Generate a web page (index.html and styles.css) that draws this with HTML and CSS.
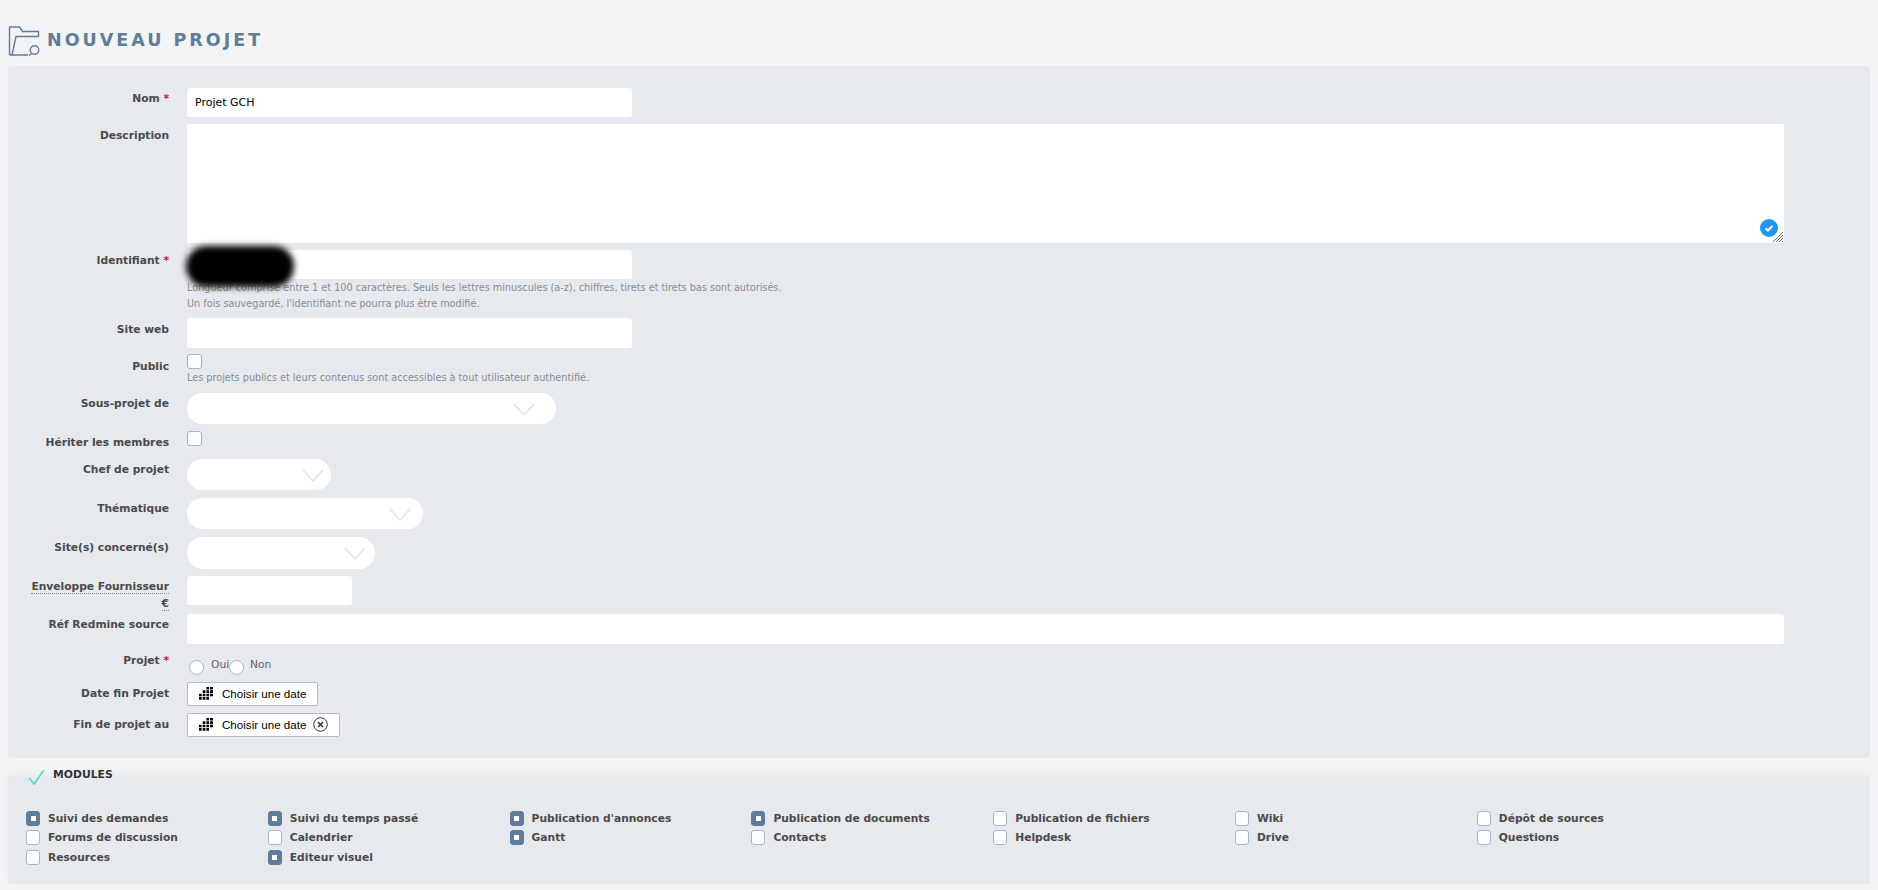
FILE: index.html
```html
<!DOCTYPE html>
<html lang="fr">
<head>
<meta charset="utf-8">
<title>Nouveau projet</title>
<link rel="stylesheet" href="styles.css">
</head>
<body>
<header class="page-title">
  <svg class="title-icon" width="32" height="30" viewBox="0 0 32 30" fill="none" stroke="#5f7c98" stroke-width="1.4">
    <path d="M1.5 29V1h10l3 4.500h16v5"/>
    <path d="M1.500 29H20M31 10.500H8L4 29"/>
    <circle cx="26.500" cy="24" r="4.300"/>
    <path d="M23.500 27.500L21 29.500"/>
  </svg>
  <h1>NOUVEAU PROJET</h1>
</header>
<form class="panel">
  <div class="row row-nom">
    <label class="lbl">Nom <b class="req">*</b></label>
    <input class="text wide" type="text" value="Projet GCH">
  </div>
  <div class="row">
    <label class="lbl lbl-low">Description</label>
    <div class="area-wrap">
      <div class="area"></div>
      <svg class="grammar" width="18" height="18" viewBox="0 0 18 18"><circle cx="9" cy="9" r="9" fill="#2196f3"/><path d="M5.500 9.300l2.400 2.300 4.400-4.600" fill="none" stroke="#fff" stroke-width="2"/></svg>
      <svg class="grip" width="10" height="10" viewBox="0 0 10 10" stroke="#777" stroke-width="1"><path d="M0 10L10 0M3 10l7-7M6 10l4-4M9 10l1-1"/></svg>
    </div>
  </div>
  <div class="row row-id">
    <label class="lbl">Identifiant <b class="req">*</b></label>
    <div class="field">
      <div class="id-wrap">
        <input class="text wide" type="text">
        <span class="blot"></span>
      </div>
      <p class="hint hint-first">Longueur comprise entre 1 et 100 caractères. Seuls les lettres minuscules (a-z), chiffres, tirets et tirets bas sont autorisés.</p>
      <p class="hint">Un fois sauvegardé, l'identifiant ne pourra plus être modifié.</p>
    </div>
  </div>
  <div class="row row-site">
    <label class="lbl lbl-low">Site web</label>
    <input class="text wide tall" type="text">
  </div>
  <div class="row row-public">
    <label class="lbl lbl-lower">Public</label>
    <div class="field">
      <span class="box"></span>
      <p class="hint hint-pub">Les projets publics et leurs contenus sont accessibles à tout utilisateur authentifié.</p>
    </div>
  </div>
  <div class="row row-sous">
    <label class="lbl">Sous-projet de</label>
    <div class="select w369"><svg class="chev chev-sous" width="22" height="13" viewBox="0 0 22 13" fill="none" stroke="#e3e5e9" stroke-width="1.5"><path d="M1 1l10 11L21 1"/></svg></div>
  </div>
  <div class="row row-inherit">
    <label class="lbl lbl-low">Hériter les membres</label>
    <span class="box"></span>
  </div>
  <div class="row row-sel">
    <label class="lbl">Chef de projet</label>
    <div class="select w144"><svg class="chev chev-chef" width="22" height="13" viewBox="0 0 22 13" fill="none" stroke="#e3e5e9" stroke-width="1.5"><path d="M1 1l10 11L21 1"/></svg></div>
  </div>
  <div class="row row-sel">
    <label class="lbl">Thématique</label>
    <div class="select w236"><svg class="chev chev-them" width="22" height="13" viewBox="0 0 22 13" fill="none" stroke="#e3e5e9" stroke-width="1.5"><path d="M1 1l10 11L21 1"/></svg></div>
  </div>
  <div class="row row-sites">
    <label class="lbl">Site(s) concerné(s)</label>
    <div class="select w188"><svg class="chev chev-sites" width="22" height="13" viewBox="0 0 22 13" fill="none" stroke="#e3e5e9" stroke-width="1.5"><path d="M1 1l10 11L21 1"/></svg></div>
  </div>
  <div class="row row-env">
    <label class="lbl"><abbr class="dotted">Enveloppe Fournisseur</abbr><br><abbr class="dotted">€</abbr></label>
    <input class="text narrow" type="text">
  </div>
  <div class="row row-ref">
    <label class="lbl">Réf Redmine source</label>
    <input class="text full tall" type="text">
  </div>
  <div class="row row-radio">
    <label class="lbl">Projet <b class="req">*</b></label>
    <div class="radios">
      <span class="radio"></span><span class="radio-text oui">Oui</span>
      <span class="radio"></span><span class="radio-text non">Non</span>
    </div>
  </div>
  <div class="row row-date">
    <label class="lbl lbl-date">Date fin Projet</label>
    <button class="date-btn" type="button">
      <svg class="cal" width="14" height="13" viewBox="0 0 14 13" fill="#000"><path d="M7.400 0H10v2.600H7.400zM11 0h3v2.600h-3zM3.700 3.300h2.700v2.700H3.700zM7.400 3.300H10v2.700H7.400zM11 3.300h3v2.700h-3zM0 6.700h2.700v2.600H0zM3.700 6.700h2.700v2.600H3.700zM7.400 6.700H10v2.600H7.400zM11 6.700h3v2.600h-3zM0 10h2.700v2.700H0zM3.700 10h2.700v2.700H3.700zM7.400 10H10v2.700H7.400z"/></svg>
      <span>Choisir une date</span>
    </button>
  </div>
  <div class="row row-date2">
    <label class="lbl lbl-date">Fin de projet au</label>
    <button class="date-btn" type="button">
      <svg class="cal" width="14" height="13" viewBox="0 0 14 13" fill="#000"><path d="M7.400 0H10v2.600H7.400zM11 0h3v2.600h-3zM3.700 3.300h2.700v2.700H3.700zM7.400 3.300H10v2.700H7.400zM11 3.300h3v2.700h-3zM0 6.700h2.700v2.600H0zM3.700 6.700h2.700v2.600H3.700zM7.400 6.700H10v2.600H7.400zM11 6.700h3v2.600h-3zM0 10h2.700v2.700H0zM3.700 10h2.700v2.700H3.700zM7.400 10H10v2.700H7.400z"/></svg>
      <span>Choisir une date</span>
      <svg class="clear" width="15" height="15" viewBox="0 0 15 15" fill="none" stroke="#333"><circle cx="7.500" cy="7.500" r="6.800"/><path d="M5 5l5 5M10 5l-5 5" stroke-width="1.600"/></svg>
    </button>
  </div>
</form>
<section class="modules">
  <h2 class="mod-title">
    <svg width="17" height="15" viewBox="0 0 17 15" fill="none" stroke="#5fd3c4" stroke-width="1.600"><path d="M1 8l5 6L16 0"/></svg>
    <span>MODULES</span>
  </h2>
  <div class="mod-grid">
    <label class="mod"><span class="box on"></span>Suivi des demandes</label>
    <label class="mod"><span class="box on"></span>Suivi du temps passé</label>
    <label class="mod"><span class="box on"></span>Publication d'annonces</label>
    <label class="mod"><span class="box on"></span>Publication de documents</label>
    <label class="mod"><span class="box"></span>Publication de fichiers</label>
    <label class="mod"><span class="box"></span>Wiki</label>
    <label class="mod"><span class="box"></span>Dépôt de sources</label>
    <label class="mod"><span class="box"></span>Forums de discussion</label>
    <label class="mod"><span class="box"></span>Calendrier</label>
    <label class="mod"><span class="box on"></span>Gantt</label>
    <label class="mod"><span class="box"></span>Contacts</label>
    <label class="mod"><span class="box"></span>Helpdesk</label>
    <label class="mod"><span class="box"></span>Drive</label>
    <label class="mod"><span class="box"></span>Questions</label>
    <label class="mod"><span class="box"></span>Resources</label>
    <label class="mod"><span class="box on"></span>Editeur visuel</label>
  </div>
</section>
</body>
</html>
```
FILE: styles.css
```css
* { box-sizing: border-box; }
html, body { margin: 0; padding: 0; }
body {
  height: 890px;
  overflow: hidden;
  background: #f3f4f6;
  font-family: "DejaVu Sans", sans-serif;
  font-size: 10.700px;
  color: #4a4a4a;
  padding: 0 8px;
}
.page-title {
  display: flex;
  align-items: center;
  height: 66px;
  padding-top: 16px;
  gap: 7px;
}
.title-icon { flex: none; }
h1 {
  margin: 0 0 2px;
  font-family: "DejaVu Sans", sans-serif;
  font-weight: 700;
  font-size: 17.500px;
  letter-spacing: 3px;
  color: #5f7c98;
}
.panel {
  height: 692px;
  background: #e6e9ee;
  border-radius: 3px;
  padding-top: 22px;
}
.row { display: flex; align-items: flex-start; margin-bottom: 7px; }
.lbl {
  flex: none;
  width: 161px;
  margin-right: 18px;
  padding-top: 2px;
  text-align: right;
  font-weight: 700;
  line-height: 17px;
  color: #4a4a4a;
}
.lbl-low { padding-top: 3px; }
.lbl-lower { padding-top: 4px; }
.lbl-date { padding-top: 3px; }
.req { color: #c8102e; }
.text {
  display: block;
  height: 29px;
  border: 0;
  border-radius: 3px;
  background: #fff;
  padding: 0 8px;
  font-family: "DejaVu Sans", sans-serif;
  font-size: 11px;
  color: #000;
  outline: none;
}
.wide { width: 445px; }
.full { width: 1597px; }
.narrow { width: 165px; }
.tall { height: 30px; }
.area-wrap { position: relative; }
.area { width: 1597px; height: 119px; background: #fff; border-radius: 2px; }
.grammar { position: absolute; right: 6px; bottom: 6px; }
.grip { position: absolute; right: 1px; bottom: 1px; }
.field { display: flex; flex-direction: column; align-items: flex-start; }
.id-wrap { position: relative; }
.blot {
  position: absolute;
  left: -1px;
  top: -4px;
  width: 108px;
  height: 41px;
  border-radius: 20px;
  background: #000;
  filter: blur(3px);
}
.hint { margin: 0; font-size: 9.700px; line-height: 16px; color: #8a8d91; }
.hint-first { margin-top: 1px; }
.row-id { margin-bottom: 7px; height: 61px; }
.row-site { margin-bottom: 6px; }
.box {
  display: block;
  flex: none;
  width: 15px;
  height: 15px;
  background: #fff;
  border: 1px solid #a9b6c6;
  border-radius: 3px;
}
.hint-pub { margin-top: 1px; }
.row-public { height: 32px; margin-bottom: 7px; }
.row-sous { margin-bottom: 7px; }
.row-sel { margin-bottom: 8px; }
.row-sites { margin-bottom: 7px; }
.row-inherit { height: 21px; margin-bottom: 7px; }
.select {
  position: relative;
  height: 31px;
  background: #fff;
  border-radius: 16px;
}
.w369 { width: 369px; }
.w144 { width: 144px; }
.w236 { width: 236px; }
.w188 { width: 188px; height: 32px; }
.chev { position: absolute; top: 10px; }
.chev-sous { right: 21px; }
.chev-chef { right: 7px; }
.chev-them { right: 12px; }
.chev-sites { right: 9px; }
.row-env { margin-bottom: 9px; height: 29px; }
.dotted { text-decoration: none; border-bottom: 1px dotted #8a8d91; }
.row-ref { margin-bottom: 6px; }
.row-radio { margin-bottom: 6px; height: 26px; }
.radios { display: flex; align-items: flex-start; padding: 9px 0 0 2px; }
.radio {
  display: block;
  flex: none;
  width: 15px;
  height: 15px;
  margin-top: 1px;
  background: #fff;
  border: 1px solid #a9b6c6;
  border-radius: 50%;
}
.radio-text { margin-left: 7px; color: #5f6368; line-height: 11px; }
.oui { width: 18px; }
.non { margin-left: 6px; }
.row-date { margin-bottom: 7px; }
.date-btn {
  display: flex;
  align-items: center;
  height: 24px;
  padding: 0 11px 2px 11px;
  background: #fff;
  border: 1px solid #b4bcc7;
  border-radius: 2px;
  font-family: "Liberation Sans", sans-serif;
  font-size: 11.600px;
  color: #000;
}
.cal { margin-right: 9px; }
.clear { margin-left: 7px; }
.modules {
  position: relative;
  margin-top: 18px;
  height: 108px;
  background: #e6e9ee;
  border-radius: 3px;
  box-shadow: 0 -4px 10px rgba(0, 0, 0, .03);
  padding: 0 18px;
}
.mod-title {
  display: flex;
  align-items: flex-start;
  gap: 8px;
  height: 35px;
  margin: 0 0 0 2px;
  font-size: 10.800px;
  font-weight: 700;
  color: #333;
  transform: translateY(-8px);
}
.mod-title svg { margin-top: 2px; }
.mod-grid {
  display: grid;
  grid-template-columns: repeat(7, 241.800px);
  grid-template-rows: 19px 20px 20px;
}
.mod {
  display: flex;
  align-items: flex-start;
  gap: 8px;
  font-weight: 700;
  line-height: 15px;
}
.mod .box { width: 14px; height: 15px; }
.box.on {
  background: #5f7c98;
  border-color: #5f7c98;
  position: relative;
}
.box.on::after {
  content: "";
  position: absolute;
  left: 3.500px;
  top: 4px;
  width: 5px;
  height: 5px;
  background: #fff;
}
```
